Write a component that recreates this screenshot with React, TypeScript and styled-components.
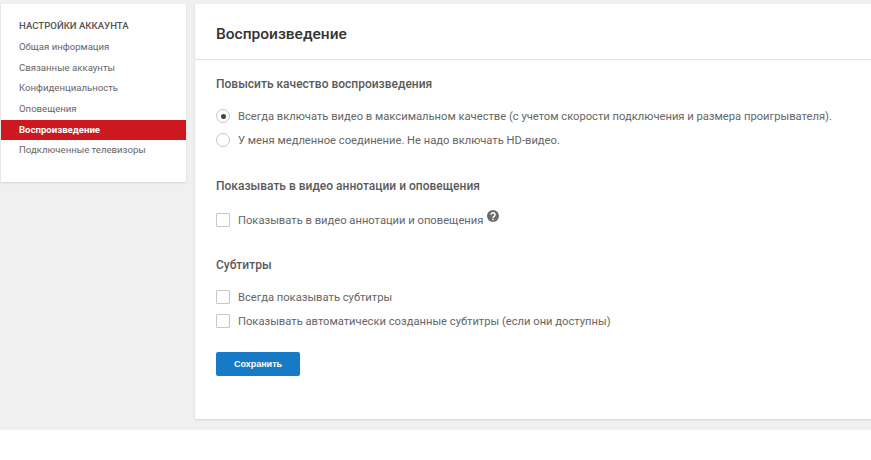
import React from "react";
import styled, { createGlobalStyle } from "styled-components";

const Global = createGlobalStyle`
  html, body { margin: 0; padding: 0; background: #fff; }
  body { font-family: Roboto, "Liberation Sans", Arial, sans-serif; overflow: hidden; }
`;

const Page = styled.div`
  width: 871px;
  height: 430px;
  background: #f0f0f0;
  padding: 4px 0 0 1px;
  box-sizing: border-box;
  display: flex;
  align-items: flex-start;
  gap: 9px;
  overflow: hidden;
`;

const Sidebar = styled.nav`
  width: 185px;
  height: 178px;
  background: #fff;
  box-shadow: 0 1px 2px rgba(0, 0, 0, 0.12);
  padding-top: 11px;
  box-sizing: border-box;
  flex: none;
`;

const SideTitle = styled.div`
  font-size: 9.6px;
  font-weight: 500;
  color: #555;
  padding-left: 18px;
  height: 22px;
  line-height: 21px;
`;

const SideItem = styled.div<{ $active?: boolean }>`
  height: 20.7px;
  line-height: 20.7px;
  padding-left: 18px;
  font-size: 9.6px;
  font-weight: ${(p) => (p.$active ? 700 : 400)};
  color: ${(p) => (p.$active ? "#fff" : "#666")};
  background: ${(p) => (p.$active ? "#cc181e" : "transparent")};
`;

const Main = styled.main`
  width: 676px;
  height: 415px;
  background: #fff;
  box-shadow: 0 1px 2px rgba(0, 0, 0, 0.12);
  flex: none;
`;

const Header = styled.header`
  height: 55px;
  border-bottom: 1px solid #e2e2e2;
  padding-left: 21px;
  font-size: 15.5px;
  font-weight: 500;
  line-height: 60px;
  color: #333;
  box-sizing: content-box;
`;

const Body = styled.div`
  padding: 16px 21px 0;
  display: flex;
  flex-direction: column;
`;

const SectionTitle = styled.h2<{ $gap: number }>`
  margin: 0 0 ${(p) => p.$gap}px;
  font-size: 12px;
  font-weight: 500;
  color: #5a5a5a;
  line-height: 16px;
`;

const Section = styled.section<{ $gap: number }>`
  margin-bottom: ${(p) => p.$gap}px;
`;

const Option = styled.div`
  display: flex;
  align-items: center;
  gap: 8px;
  height: 24px;
  font-size: 11.2px;
  color: #666;
  white-space: nowrap;
`;

const Radio = styled.span<{ $on?: boolean }>`
  width: 14px;
  height: 14px;
  box-sizing: border-box;
  border-radius: 50%;
  border: 1px solid #c8c8c8;
  background: #fff;
  flex: none;
  display: flex;
  align-items: center;
  justify-content: center;
  &::after {
    content: "";
    width: 5px;
    height: 5px;
    border-radius: 50%;
    background: ${(p) => (p.$on ? "#444" : "transparent")};
  }
`;

const Check = styled.span`
  width: 14px;
  height: 14px;
  box-sizing: border-box;
  border: 1px solid #c8c8c8;
  border-radius: 1px;
  background: #fff;
  flex: none;
`;

const Help = styled.svg`
  width: 12px;
  height: 12px;
  margin: -8px 0 0 -4px;
  flex: none;
`;

const SaveButton = styled.button`
  width: 84px;
  height: 24px;
  border: none;
  border-radius: 2px;
  background: #167ac6;
  color: #fff;
  font-family: "Liberation Sans", Arial, sans-serif;
  font-size: 9px;
  font-weight: 700;
  padding: 0;
`;

export default function App() {
  return (
    <>
      <Global />
      <Page>
        <Sidebar>
          <SideTitle>НАСТРОЙКИ АККАУНТА</SideTitle>
          <SideItem>Общая информация</SideItem>
          <SideItem>Связанные аккаунты</SideItem>
          <SideItem>Конфиденциальность</SideItem>
          <SideItem>Оповещения</SideItem>
          <SideItem $active>Воспроизведение</SideItem>
          <SideItem>Подключенные телевизоры</SideItem>
        </Sidebar>
        <Main>
          <Header>Воспроизведение</Header>
          <Body>
            <Section $gap={26}>
              <SectionTitle $gap={12}>Повысить качество воспроизведения</SectionTitle>
              <Option>
                <Radio $on />
                Всегда включать видео в максимальном качестве (с учетом скорости подключения и размера проигрывателя).
              </Option>
              <Option>
                <Radio />
                У меня медленное соединение. Не надо включать HD-видео.
              </Option>
            </Section>
            <Section $gap={25}>
              <SectionTitle $gap={14}>Показывать в видео аннотации и оповещения</SectionTitle>
              <Option>
                <Check />
                Показывать в видео аннотации и оповещения
                <Help viewBox="0 0 24 24">
                  <circle cx="12" cy="12" r="12" fill="#6b6b6b" />
                  <path d="M8 9.5a4 4 0 1 1 6.2 3.3c-1.3.9-2.2 1.5-2.2 3" fill="none" stroke="#fff" strokeWidth="3" />
                  <rect x="10.5" y="17.5" width="3" height="3" fill="#fff" />
                </Help>
              </Option>
            </Section>
            <Section $gap={19}>
              <SectionTitle $gap={12}>Субтитры</SectionTitle>
              <Option>
                <Check />
                Всегда показывать субтитры
              </Option>
              <Option>
                <Check />
                Показывать автоматически созданные субтитры (если они доступны)
              </Option>
            </Section>
            <SaveButton>Сохранить</SaveButton>
          </Body>
        </Main>
      </Page>
    </>
  );
}
